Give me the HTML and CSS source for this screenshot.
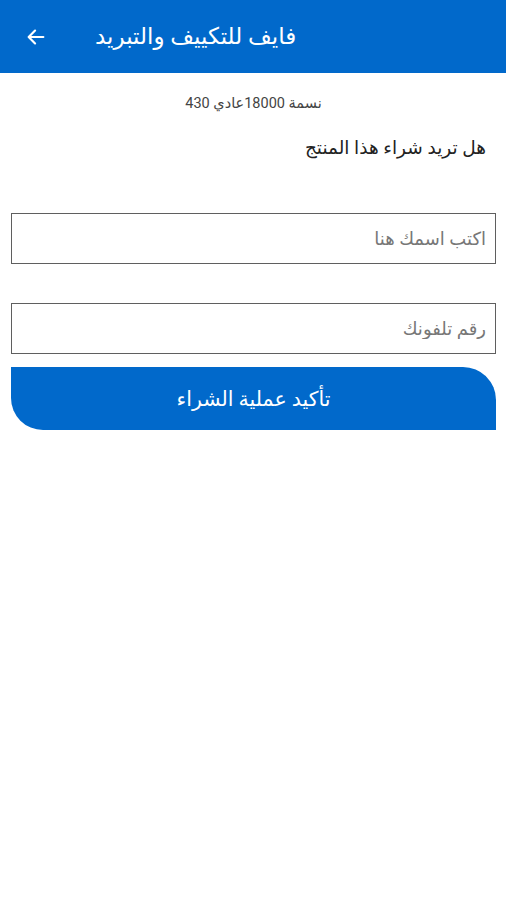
FILE: index.html
```html
<!DOCTYPE html>
<html lang="ar" dir="rtl">
<head>
<meta charset="utf-8">
<link rel="stylesheet" href="styles.css">
</head>
<body>
<header class="appbar">
  <button class="back" aria-label="رجوع">
    <svg width="22" height="22" viewBox="0 0 24 24"><path d="M20 12H4.5M11 5l-7 7 7 7" fill="none" stroke="#fff" stroke-width="2.4" stroke-linecap="round" stroke-linejoin="round"/></svg>
  </button>
  <h1 class="title">فايف للتكييف والتبريد</h1>
</header>
<main class="content">
  <p class="info">نسمة 18000عادي 430</p>
  <p class="question">هل تريد شراء هذا المنتج</p>
  <div class="field first"><input type="text" placeholder="اكتب اسمك هنا"></div>
  <div class="field second"><input type="tel" placeholder="رقم تلفونك"></div>
  <button class="confirm">تأكيد عملية الشراء</button>
</main>
</body>
</html>
```
FILE: styles.css
```css
* { box-sizing: border-box; }
html, body { margin: 0; padding: 0; background: #fff; }
body { font-family: Roboto, "DejaVu Sans", sans-serif; width: 506px; height: 900px; }
.appbar {
  height: 73px;
  background: #0169cb;
  display: flex;
  align-items: center;
  direction: ltr;
  padding: 0 0 0 25px;
}
.back {
  background: none; border: 0; padding: 0; margin: 0 48px 0 0;
  width: 22px; height: 22px; display: flex; align-items: center; justify-content: center;
}
.title {
  margin: 0; color: #fff; font-size: 23px; font-weight: 500; direction: rtl;
}
.content { padding: 0 10px 0 11px; }
.info {
  margin: 22px 0 0; text-align: center; font-size: 14.5px; color: #444; line-height: 18px;
}
.question {
  margin: 23px 10px 0 0; font-size: 18.5px; color: #222; line-height: 24px;
}
.field { height: 51px; border: 1px solid #5f5f5f; }
.field.first { margin-top: 53px; }
.field.second { margin-top: 39px; }
.field input {
  width: 100%; height: 100%; border: 0; outline: 0; background: transparent;
  padding: 0 9px; font-family: inherit; font-size: 18px; color: #333; direction: rtl;
}
.field input::placeholder { color: #777; }
.confirm {
  display: block; width: 100%; margin-top: 13px; height: 63px;
  background: #0169cb; color: #fff; border: 0;
  border-radius: 0 33px 0 32px;
  font-family: inherit; font-size: 20.5px; font-weight: 500;
}
```
